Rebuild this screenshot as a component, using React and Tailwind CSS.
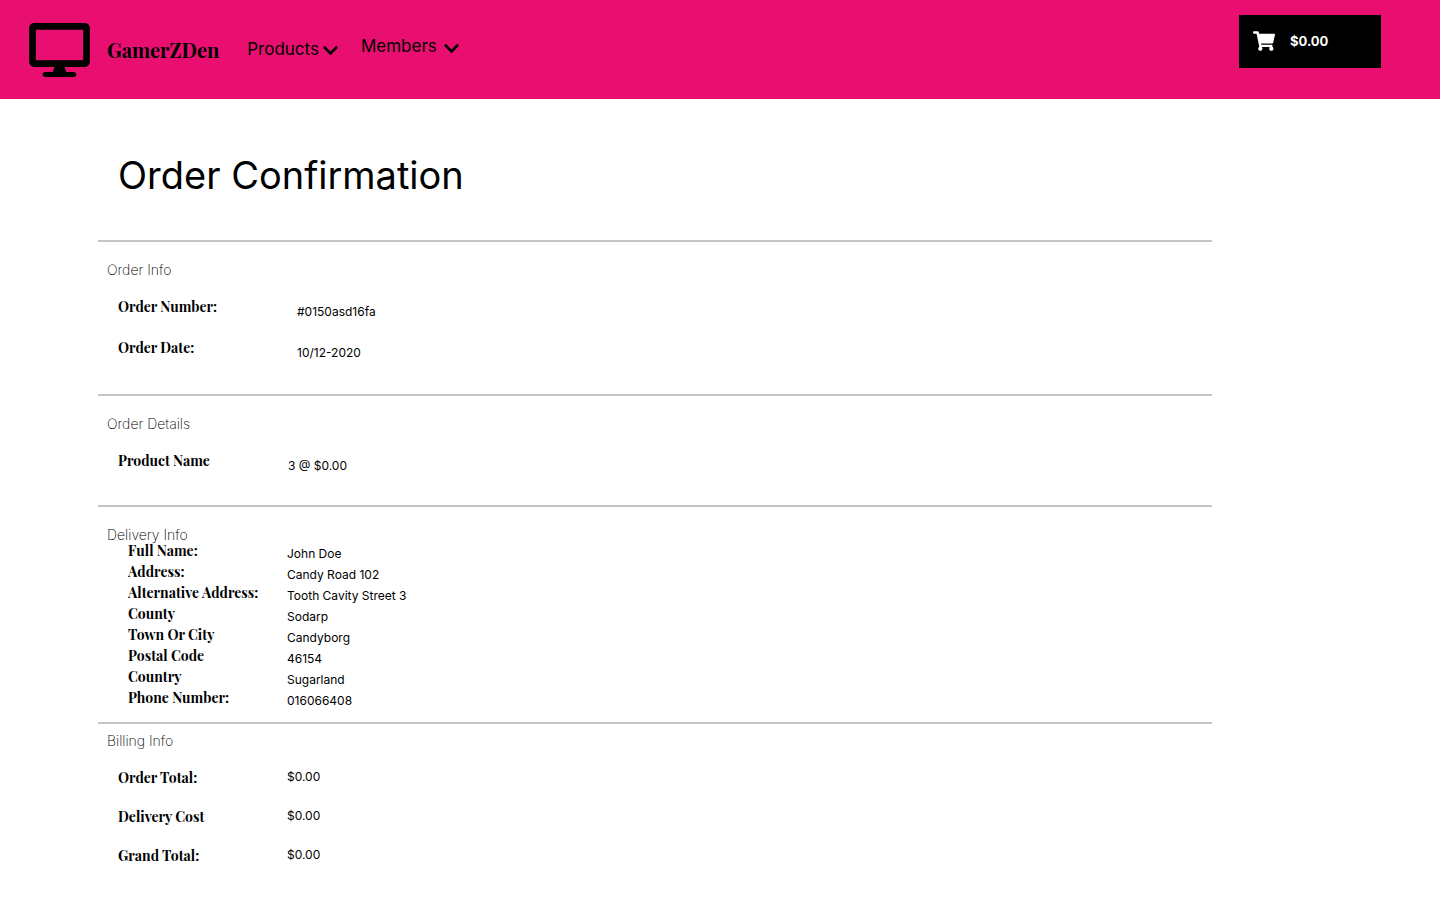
import { FaDesktop, FaChevronDown, FaShoppingCart } from "react-icons/fa";

const SERIF = "font-['Playfair_Display','Liberation_Serif',serif]";

const sections = [
  {
    title: "Order Info",
    section: "pt-[21px] pb-[26px]",
    list: "mt-[9px] pl-5",
    row: "h-[41px]",
    label: "w-[179px]",
    value: "pt-2.5",
    rows: [
      ["Order Number:", "#0150asd16fa"],
      ["Order Date:", "10/12-2020"],
    ],
  },
  {
    title: "Order Details",
    section: "pt-[21px] pb-6",
    list: "mt-[9px] pl-5",
    row: "h-[41px]",
    label: "w-[170px]",
    value: "pt-2.5",
    rows: [["Product Name", "3 @ $0.00"]],
  },
  {
    title: "Delivery Info",
    section: "pt-[21px] pb-3.5",
    list: "-mt-0.5 pl-[30px]",
    row: "h-[21px]",
    label: "w-[159px]",
    value: "pt-1.5",
    rows: [
      ["Full Name:", "John Doe"],
      ["Address:", "Candy Road 102"],
      ["Alternative Address:", "Tooth Cavity Street 3"],
      ["County", "Sodarp"],
      ["Town Or City", "Candyborg"],
      ["Postal Code", "46154"],
      ["Country", "Sugarland"],
      ["Phone Number:", "016066408"],
    ],
  },
  {
    title: "Billing Info",
    section: "pt-2.5",
    list: "mt-2.5 pl-5",
    row: "h-[39px]",
    label: "w-[169px]",
    value: "pb-0.5",
    rows: [
      ["Order Total:", "$0.00"],
      ["Delivery Cost", "$0.00"],
      ["Grand Total:", "$0.00"],
    ],
  },
];

function Header() {
  return (
    <header className="flex h-[99px] items-start bg-[#e80f71] pr-[59px] pl-[29px]">
      <a href="#home" className="flex h-full items-center gap-[17px]">
        <FaDesktop className="h-[54px] w-[61px]" />
        <span className={`${SERIF} text-[20px] leading-7 font-bold`}>GamerZDen</span>
      </a>
      <nav className="ml-7 flex h-full items-center gap-[23px] text-[17px]">
        <button type="button" className="flex items-center gap-1">
          Products
          <FaChevronDown className="mt-0.5 h-[17px] w-[15px]" />
        </button>
        <button type="button" className="flex items-center gap-[7px] pb-1.5">
          Members
          <FaChevronDown className="mt-1 h-[17px] w-[15px]" />
        </button>
      </nav>
      <button
        type="button"
        aria-label="Cart, $0.00"
        className="mt-[15px] ml-auto flex h-[53px] w-[142px] items-center gap-[15px] bg-black pl-[14px] text-[13px] font-bold text-white"
      >
        <FaShoppingCart className="mb-0.5 h-5 w-[22px]" />
        $0.00
      </button>
    </header>
  );
}

function Section({ data }) {
  return (
    <section className={`border-t-2 border-[#c4c4c4] ${data.section}`}>
      <h2 className="pl-[9px] text-[14px] leading-[14px] font-extralight">{data.title}</h2>
      <dl className={data.list}>
        {data.rows.map(([label, value]) => (
          <div key={label} className={`flex items-center ${data.row}`}>
            <dt className={`${SERIF} shrink-0 text-[14px] leading-5 font-bold ${data.label}`}>{label}</dt>
            <dd className={`text-[12px] leading-4 ${data.value}`}>{value}</dd>
          </div>
        ))}
      </dl>
    </section>
  );
}

export default function App() {
  return (
    <div className="min-h-screen bg-white font-['Inter',sans-serif] text-black">
      <Header />
      <main className="mr-[228px] ml-[98px] pt-[52px]">
        <h1 className="mb-[41px] pl-5 text-[38px] leading-[48px] font-normal">Order Confirmation</h1>
        {sections.map((data) => (
          <Section key={data.title} data={data} />
        ))}
      </main>
    </div>
  );
}
